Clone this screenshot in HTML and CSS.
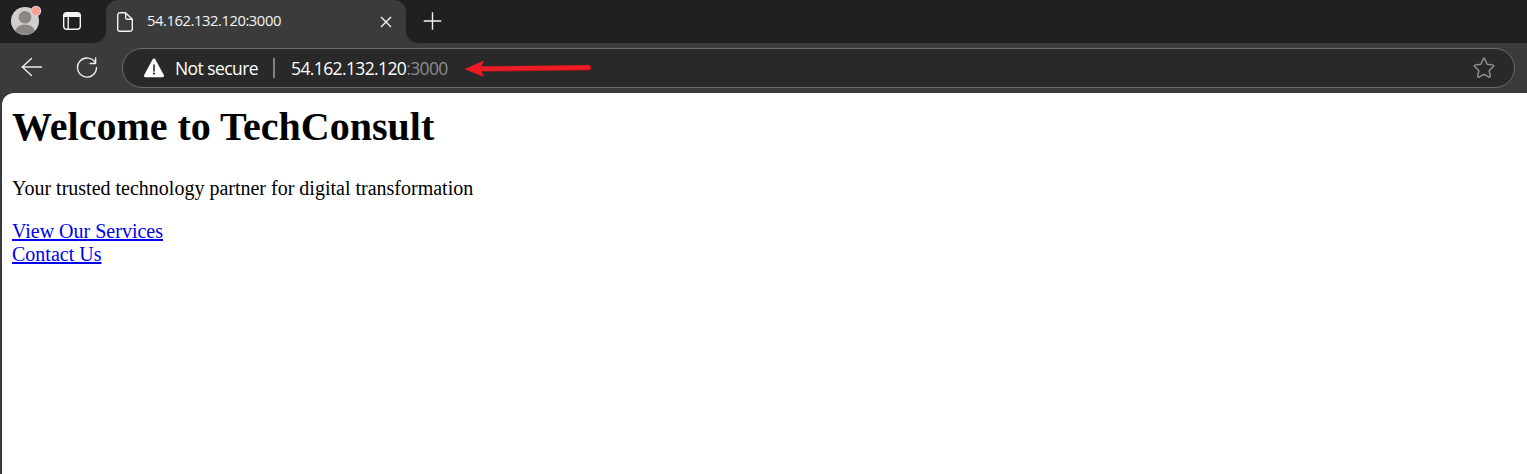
FILE: index.html
```html
<!DOCTYPE html>
<html lang="en">
<head>
<meta charset="utf-8">
<title>54.162.132.120:3000</title>
<link rel="stylesheet" href="styles.css">
</head>
<body>
<div class="browser">
  <div class="tabstrip">
    <svg class="avatar" width="32" height="32" viewBox="0 0 32 32">
      <defs><clipPath id="face"><circle cx="15" cy="16" r="14"/></clipPath></defs>
      <circle cx="15" cy="16" r="14" fill="#d0cfcb"/>
      <g clip-path="url(#face)" fill="#8b8784"><circle cx="15" cy="12.3" r="6.3"/><ellipse cx="15" cy="26.5" rx="9.7" ry="7"/></g>
      <circle cx="26" cy="6" r="5.2" fill="#d9d4d0"/><circle cx="26" cy="6" r="4.2" fill="#ff9d96"/>
    </svg>
    <svg class="workspaces" width="20" height="20" viewBox="0 0 20 20" fill="none" stroke="#f4f4f4" stroke-width="1.4">
      <rect x="1.7" y="1.7" width="16.6" height="16.6" rx="3"/><path d="M2 4.2c0-1.5 1-2.5 2.5-2.5h11c1.5 0 2.5 1 2.5 2.500v1.800H2z" fill="#f4f4f4" stroke="none"/><path d="M6.200 5v13"/>
    </svg>
    <div class="tab">
      <svg width="18" height="22" viewBox="0 0 18 22" fill="none" stroke="#f2f2f2" stroke-width="1.4" stroke-linejoin="round"><path d="M9.500 1.700H4A2.300 2.300 0 0 0 1.700 4v14A2.300 2.300 0 0 0 4 20.300h10a2.300 2.300 0 0 0 2.300-2.300V8.300zM9.700 1.700v5a1.500 1.500 0 0 0 1.500 1.500h5"/></svg>
      <span class="tab-title">54.162.132.120:3000</span>
      <svg class="close" width="14" height="14" viewBox="0 0 14 14" stroke="#f6f6f6" stroke-width="1.4"><path d="M2 2l10 10M12 2L2 12"/></svg>
    </div>
    <svg class="new-tab" width="20" height="20" viewBox="0 0 20 20" stroke="#f2f2f2" stroke-width="1.4"><path d="M10.500 1.200v17.600M1.700 10h17.600"/></svg>
  </div>
  <div class="toolbar">
    <svg class="back" width="24" height="22" viewBox="0 0 24 22" fill="none" stroke="#ededed" stroke-width="1.4" stroke-linecap="round" stroke-linejoin="round"><path d="M21.500 11H2M11.500 2.500L2.300 11l9.200 8.500"/></svg>
    <svg class="reload" width="24" height="24" viewBox="0 0 24 24" fill="none" stroke="#ededed" stroke-width="1.4" stroke-linecap="round" stroke-linejoin="round"><path d="M20.600 8.500A9.500 9.500 0 1 0 21.500 12.400M20.600 3v5.500h-5.500"/></svg>
    <div class="address">
      <svg class="warning" width="22" height="20" viewBox="0 0 22 20"><path d="M9.500 1.400a1.700 1.700 0 0 1 3 0l8.300 15.500a1.500 1.500 0 0 1-1.300 2.300h-17a1.500 1.500 0 0 1-1.300-2.300z" fill="#fff"/><path d="M11 7v6" stroke="#292929" stroke-width="1.6" stroke-linecap="round"/><circle cx="11" cy="15.5" r="1.1" fill="#292929"/></svg>
      <span class="security">Not secure</span>
      <span class="divider"></span>
      <span class="url">54.162.132.120<span class="port">:3000</span></span>
      <svg class="arrow" width="130" height="22" viewBox="0 0 130 22"><path d="M17 12L124.500 10.800" stroke="#9d171b" stroke-width="5.4" stroke-linecap="round"/><path d="M15 11.700L124.500 10.500" stroke="#ed1c24" stroke-width="4.4" stroke-linecap="round"/><path d="M.5 12L20 3.500l-4 8.300 4.100 8.200z" fill="#ed1c24"/></svg>
      <svg class="star" width="24" height="24" viewBox="0 0 24 24" fill="none" stroke="#929292" stroke-width="1.4" stroke-linejoin="round"><path d="M11.300 2.900q.7-1.200 1.400 0l2.500 5.400 5.900.8q1.200.3.400 1.300l-4.300 4.100 1.100 5.900q.1 1.200-1.100.8L12 18.300l-5.200 2.900q-1.200.4-1.100-.8l1.100-5.900-4.300-4.100q-.8-1 .4-1.300l5.900-.8z"/></svg>
    </div>
  </div>
  <main class="page">
    <h1>Welcome to TechConsult</h1>
    <p>Your trusted technology partner for digital transformation</p>
    <a class="services" href="#">View Our Services</a><br>
    <a class="contact" href="#">Contact Us</a>
  </main>
</div>
</body>
</html>
```
FILE: styles.css
```css
* { box-sizing: border-box; }
body { margin: 0; background: #3b3b3b; overflow: hidden; }
svg { display: block; flex: none; }
.browser { height: 474px; display: flex; flex-direction: column; font-family: "Open Sans", sans-serif; }
.tabstrip { height: 43px; display: flex; background: #202020; }
.avatar { margin: 5px 0 0 10px; }
.workspaces { margin: 11px 0 0 20px; }
.tab { position: relative; width: 300px; height: 43px; margin-left: 24px; padding: 0 13px 0 10px; display: flex; align-items: center; background: #3b3b3b; border-radius: 12px 12px 0 0; }
.tab::before, .tab::after { content: ""; position: absolute; bottom: 0; width: 12px; height: 12px; }
.tab::before { left: -12px; background: radial-gradient(circle at 0 0, #202020 11.5px, #3b3b3b 12.5px); }
.tab::after { right: -12px; background: radial-gradient(circle at 100% 0, #202020 11.5px, #3b3b3b 12.5px); }
.tab-title { margin: -4px 0 0 13px; color: #f4f4f4; font-size: 14.8px; line-height: 20px; letter-spacing: -.45px; }
.close { margin-left: auto; }
.new-tab { margin: 11px 0 0 16px; }
.toolbar { height: 50px; display: flex; padding: 5px 12px 0 20px; }
.back { margin-top: 8px; }
.reload { margin: 7px 0 0 31px; }
.address { flex: 1; margin-left: 23px; height: 40px; border: 1.5px solid #6a6a6a; border-radius: 20px; background: #292929; display: flex; align-items: center; padding: 0 18px 0 20px; font-size: 17.5px; line-height: 24px; white-space: nowrap; color: #fff; }
.security { margin-left: 10px; letter-spacing: -.58px; width: 88px; }
.divider { width: 2px; height: 20px; margin-left: 10px; background: #808080; }
.url { margin-left: 16px; width: 158px; letter-spacing: -.62px; }
.port { color: #8c8c8c; }
.arrow { margin-left: 15px; }
.star { margin-left: auto; }
.page { flex: 1; margin-left: 2px; padding: 9px 10px; border-top-left-radius: 12px; background: #fff; color: #000; font-family: "Liberation Serif", serif; font-size: 20px; line-height: 23px; }
h1 { margin: 0; font-size: 40px; line-height: 50px; }
p { margin: 25px 0 20px; }
a { color: #00e; text-decoration: underline; }
```
